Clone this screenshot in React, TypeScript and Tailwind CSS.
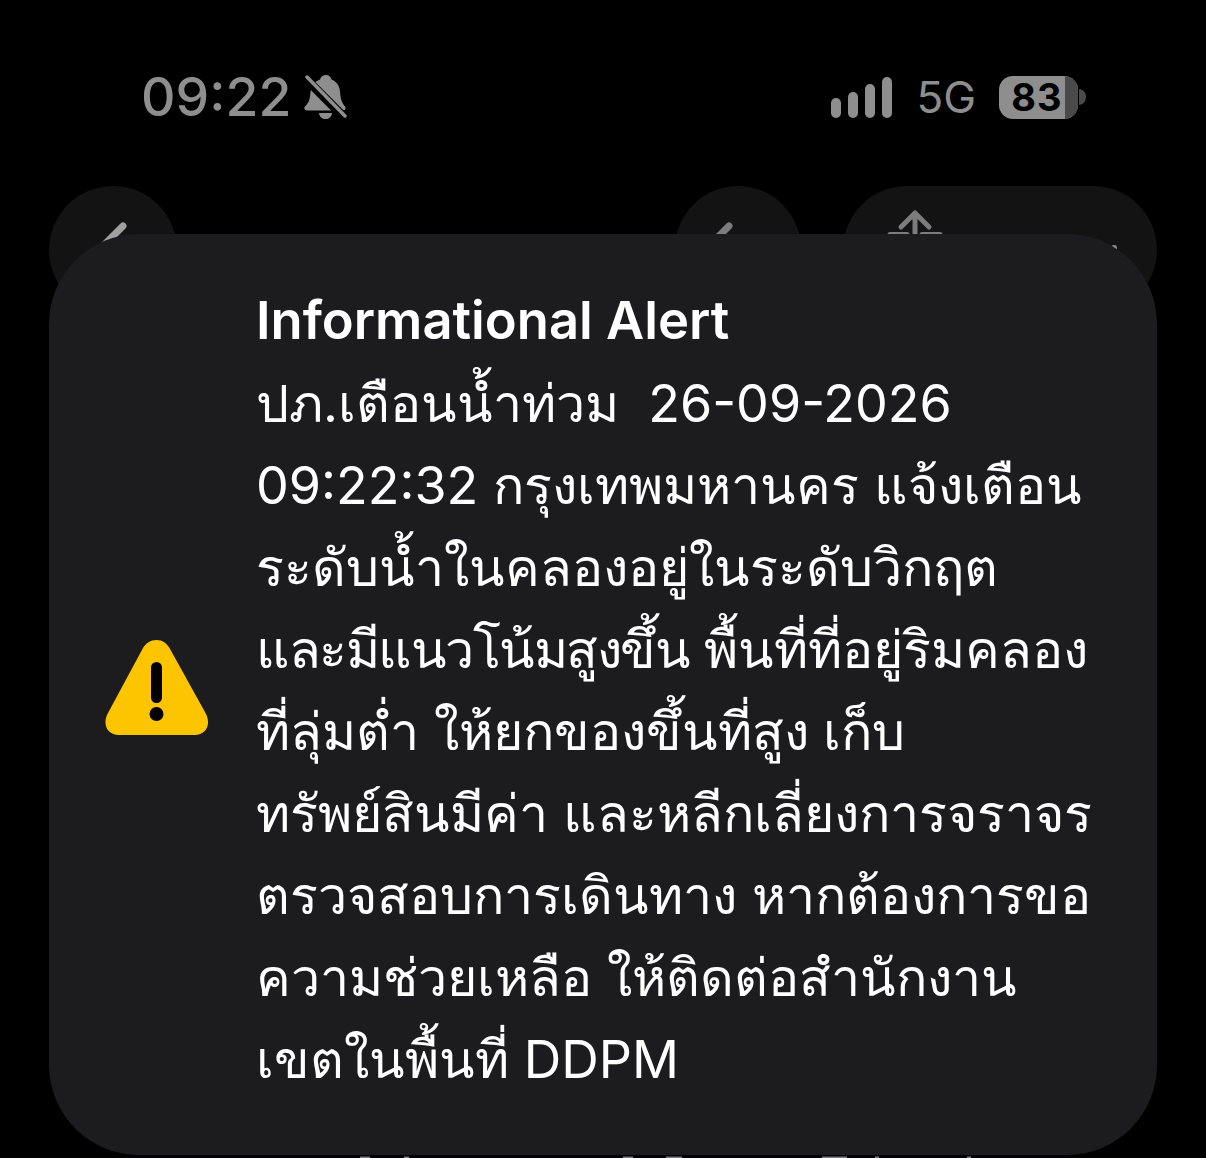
import type { ReactNode } from "react";

const lines: { key: string; node: ReactNode }[] = [
  { key: "a", node: "ปภ.เตือนน้ำท่วม  26-09-2026" },
  { key: "b", node: "09:22:32 กรุงเทพมหานคร แจ้งเตือน" },
  { key: "c", node: "ระดับน้ำในคลองอยู่ในระดับวิกฤต" },
  {
    key: "d",
    node: (
      <>
        <span className="tracking-[-1.500px]">และมีแนวโน้มสูงขึ้น</span>
        {" พื้นที่ที่อยู่ริมคลอง"}
      </>
    ),
  },
  { key: "e", node: "ที่ลุ่มต่ำ ให้ยกของขึ้นที่สูง เก็บ" },
  { key: "f", node: "ทรัพย์สินมีค่า และหลีกเลี่ยงการจราจร" },
  { key: "g", node: "ตรวจสอบการเดินทาง หากต้องการขอ" },
  { key: "h", node: "ความช่วยเหลือ ให้ติดต่อสำนักงาน" },
  { key: "i", node: "เขตในพื้นที่ DDPM" },
];

function Bell() {
  return (
    <svg width="43" height="45" viewBox="0 0 43 45" className="ml-[13px] shrink-0">
      <path d="M22 0c3 0 5 2 5.500 4.500 5 2 8 6 8.500 12 .5 6 1 10 5 15 1.500 2 .5 4-2 4H3c-2.500 0-3.500-2-2-4 3-3 4.500-6 5-10L7 13c1-3 3-6 9-8.500C16.500 2 19 0 22 0z" fill="#8e8e8e" />
      <path d="M15 38h13c-.5 4-3 6-6.500 6s-6-2-6.500-6z" fill="#8e8e8e" />
      <path d="M-1 1l42 42" stroke="#000" strokeWidth="9" />
      <path d="M3 2l38 39" stroke="#8e8e8e" strokeWidth="3.500" strokeLinecap="round" />
    </svg>
  );
}

function Signal() {
  return (
    <div className="flex items-end gap-[7px] h-[41px]">
      <div className="w-[10px] h-[20px] rounded-full bg-[#8e8e8e]" />
      <div className="w-[10px] h-[26px] rounded-full bg-[#8e8e8e]" />
      <div className="w-[10px] h-[34px] rounded-full bg-[#8e8e8e]" />
      <div className="w-[10px] h-[41px] rounded-full bg-[#8e8e8e]" />
    </div>
  );
}

function Battery() {
  return (
    <div className="flex items-center">
      <div className="relative w-[79px] h-[43px] rounded-[14px] bg-[#8e8e8e] overflow-hidden flex items-center justify-center pr-[3px]">
        <div className="absolute right-0 top-0 bottom-0 w-[13px] bg-[#4a4a4a]" />
        <span className="relative text-black font-bold text-[38px] leading-none tracking-[1px]">83</span>
      </div>
      <svg width="8" height="16" viewBox="0 0 8 16" className="ml-[1px]">
        <path d="M0 0c4 .5 7 3.500 7 8s-3 7.500-7 8z" fill="#4a4a4a" />
      </svg>
    </div>
  );
}

export default function App() {
  return (
    <div
      className="relative w-[1206px] h-[1158px] bg-black overflow-hidden text-white"
      style={{ fontFamily: '"Inter", "Liberation Sans", "Noto Sans", sans-serif' }}
    >
      <div className="flex justify-between pl-[141px] pr-[119px] pt-[72px] h-[186px]">
        <div className="flex items-center h-[50px] text-[#8e8e8e] text-[53.500px] font-medium leading-[50px]">
          <span>09:22</span>
          <Bell />
        </div>
        <div className="flex items-center h-[50px] text-[#8e8e8e]">
          <Signal />
          <span className="ml-[24px] mr-[23px] text-[44px] leading-none">5G</span>
          <Battery />
        </div>
      </div>

      <div className="flex px-[49px] h-[48px]">
        <div className="w-[128px] h-[128px] shrink-0 rounded-full bg-[#131314]">
          <svg width="128" height="128" viewBox="0 0 128 128">
            <path d="M74 40L48 66" fill="none" stroke="#a0a0a0" strokeWidth="7" strokeLinecap="round" />
          </svg>
        </div>
        <div className="w-[498px] shrink-0" />
        <div className="w-[126px] h-[128px] shrink-0 rounded-full bg-[#131314]">
          <svg width="126" height="128" viewBox="0 0 126 128">
            <path d="M54 40L28 66" fill="none" stroke="#7c7c7c" strokeWidth="7" strokeLinecap="round" />
          </svg>
        </div>
        <div className="w-[42px] shrink-0" />
        <div className="w-[314px] h-[128px] shrink-0 rounded-full bg-[#131314]">
          <svg width="314" height="128" viewBox="0 0 314 128">
            <path d="M72 62V27M58 41l14-14 14 14M47 48.500h17M79 48.500h18" fill="none" stroke="#7c7c7c" strokeWidth="5" strokeLinecap="round" strokeLinejoin="round" />
            <circle cx="271" cy="62" r="3" fill="#8a8a8a" />
          </svg>
        </div>
      </div>

      <div className="relative mx-[49px] h-[921px] rounded-[90px] bg-[#1c1c1e] flex items-center">
        <svg width="104" height="96" viewBox="0 0 104 96" className="ml-[56px] shrink-0 -mt-[14px]">
          <path d="M51.500 0c6 0 10 3 13 8l36 65c6 11 1 22-11 22H14C2 95-3 84 3 73L38 8c3-5 7.500-8 13.500-8z" fill="#fcc500" />
          <rect x="46" y="22" width="11" height="41" rx="5.500" fill="#000" />
          <circle cx="51.500" cy="74" r="7" fill="#000" />
        </svg>
        <div className="ml-[47px] whitespace-nowrap text-[52px] leading-[82px] -mt-[8px]">
          <div className="font-semibold text-[52.500px] h-[82px] leading-[78px]">Informational Alert</div>
          {lines.map((l) => (
            <div key={l.key} className="whitespace-pre h-[82px]">{l.node}</div>
          ))}
        </div>
      </div>

      <svg width="1206" height="3" viewBox="0 0 1206 3" className="block">
        <g fill="#7c7c7c">
          <rect x="360" y="1.500" width="10" height="2" />
          <rect x="404" y="1.500" width="5" height="2" />
          <rect x="623" y="1.500" width="10" height="2" />
          <rect x="666" y="1.500" width="16" height="2" />
          <rect x="822" y="1.500" width="25" height="2" />
          <rect x="875" y="1.500" width="4" height="2" />
          <rect x="967" y="1.500" width="4" height="2" />
        </g>
      </svg>
    </div>
  );
}
